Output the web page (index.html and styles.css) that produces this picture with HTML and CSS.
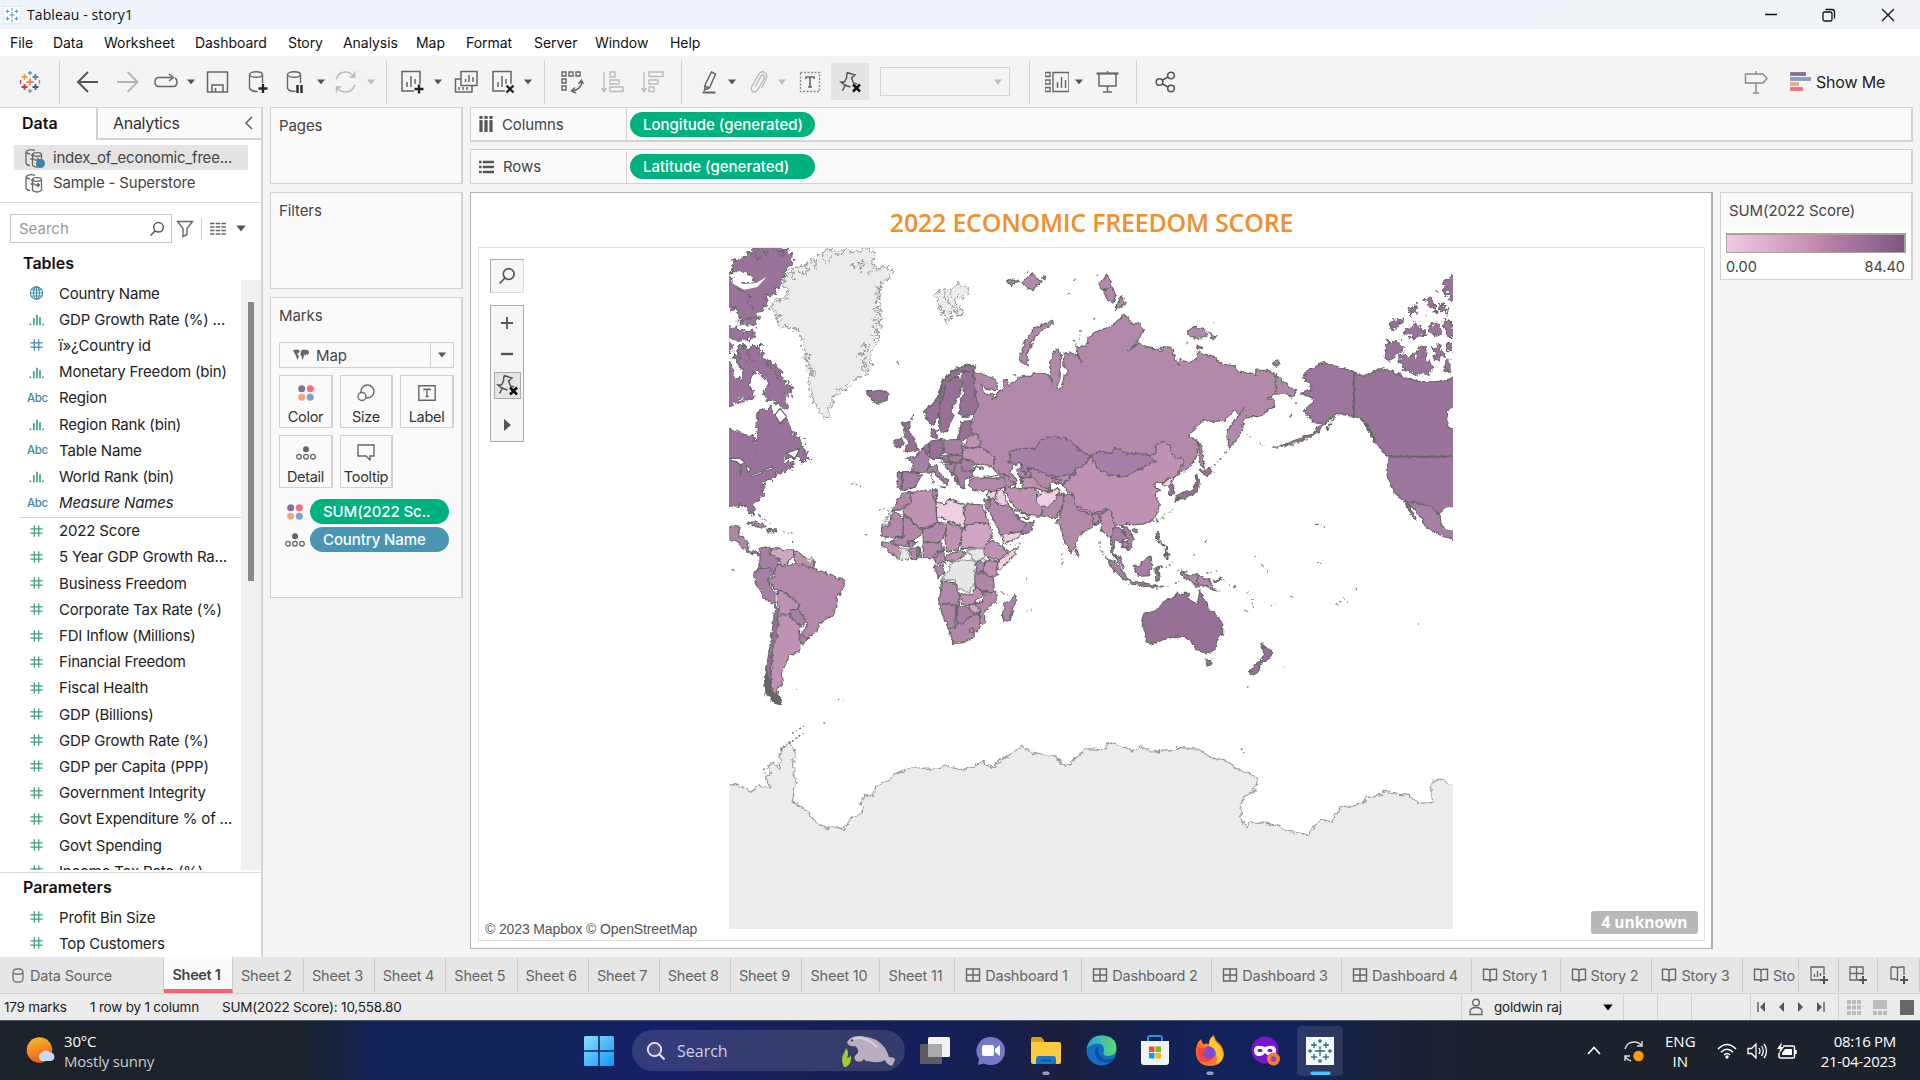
FILE: index.html
```html
<!DOCTYPE html>
<html lang="en">
<head>
<meta charset="utf-8">
<title>Tableau - story1</title>
<link rel="stylesheet" href="styles.css">
</head>
<body>
<svg class="defs" width="0" height="0">
  <defs>
    <symbol id="hash" viewBox="0 0 16 16"><path d="M5.5 1.5v13M10.5 1.5v13M1 5.5h14M1 10.5h14" fill="none" stroke="currentColor" stroke-width="1.4"/></symbol>
    <symbol id="bars" viewBox="0 0 18 16"><path d="M2 13v2M6 7v8M9.5 3v12M13 6v9M16.500 13v2" fill="none" stroke="currentColor" stroke-width="1.9"/></symbol>
    <symbol id="globe" viewBox="0 0 16 16"><g fill="none" stroke="currentColor" stroke-width="1.200"><circle cx="8" cy="8" r="7"/><ellipse cx="8" cy="8" rx="3.300" ry="7"/><path d="M8 1v14M1 8h14M2.300 4.500h11.400M2.300 11.500h11.400"/></g></symbol>
    <symbol id="dots4" viewBox="0 0 16 16"><circle cx="3.700" cy="3.700" r="3.500" fill="#85709c"/><circle cx="12.300" cy="3.700" r="3.500" fill="#f96c80"/><circle cx="3.700" cy="12.300" r="3.500" fill="#f2a67c"/><circle cx="12.300" cy="12.300" r="3.500" fill="#7f9fca"/></symbol>
    <symbol id="detail" viewBox="0 0 20 14"><circle cx="10" cy="3.200" r="3" fill="#666"/><g fill="none" stroke="#666" stroke-width="1.300"><circle cx="3" cy="10.700" r="2.300"/><circle cx="10" cy="10.700" r="2.300"/><circle cx="17" cy="10.700" r="2.300"/></g></symbol>
    <symbol id="mag" viewBox="0 0 16 16"><g fill="none" stroke="#555" stroke-width="1.500"><circle cx="9.500" cy="6.300" r="4.800"/><path d="M6 10l-4.500 4.500"/></g></symbol>
    <symbol id="caret" viewBox="0 0 8 6"><path d="M0 .5h8L4 5.500z" fill="currentColor"/></symbol>
    <symbol id="grid" viewBox="0 0 16 16"><path d="M1.500 2h13v12h-13zM8 2v12M1.500 8h13" fill="none" stroke="#666" stroke-width="1.400"/></symbol>
    <symbol id="book" viewBox="0 0 16 16"><path d="M8 4v11M1.500 2.200h4q2.500 0 2.500 2 0-2 2.500-2h4v10.500h-3.500q-3 0-3 2 0-2-3-2H1.500z" fill="none" stroke="#666" stroke-width="1.400"/></symbol>
    <symbol id="pin" viewBox="0 0 24 24"><path d="M9 2.500l8 2.500-3.500 3 2 5 3.500 1M9 2.500l-.5 5.500-2 4-3.500 0 3.500 3 1 0-3 5.500M8 15.500l4.500 1.500" fill="none" stroke="#555" stroke-width="1.500"/><path d="M15 14.500l7 7M22 14.500l-7 7" stroke="#111" stroke-width="2.500"/></symbol>
    <symbol id="dbset" viewBox="0 0 20 20"><g fill="none" stroke="#666" stroke-width="1.300"><path d="M2 3.500Q6 .5 11 2.500M2 3.500v12q1.500 2 4 2M2 4q2 2 4 2M7 7h3M6.500 11h4"/><ellipse cx="13" cy="6.500" rx="4.500" ry="1.800"/><path d="M8.500 6.500v11q4.500 3 9 0v-11M10.500 12h5m-2-2 2 2-2 2"/></g></symbol>
  </defs>
</svg>

<header class="titlebar">
  <svg class="appicon" viewBox="0 0 20 20"><rect width="20" height="20" fill="#fff" stroke="#ccc"/><path d="M10 7v6M7 10h6M5 4v4M3 6h4M15 4v4M13 6h4M5 12v4M3 14h4M15 12v4M13 14h4M10 2v3M10 15v3" stroke="#5f9fc0" stroke-width="1.300"/></svg>
  <span class="apptitle">Tableau - story1</span>
  <svg class="winctl" viewBox="0 0 140 16"><g fill="none" stroke="#111" stroke-width="1.300"><path d="M0 7.500h12M117 2l12 12M129 2l-12 12"/><rect x="58" y="5" width="9" height="9" rx="1.500"/><path d="M60.500 2.500h6.500q2.500 0 2.500 2.500v6.500"/></g></svg>
</header>
<nav class="menu"><span>File</span><span>Data</span><span>Worksheet</span><span>Dashboard</span><span>Story</span><span>Analysis</span><span>Map</span><span>Format</span><span>Server</span><span>Window</span><span>Help</span></nav>

<div class="toolbar">
  <svg class="i24" viewBox="0 0 24 24"><g stroke-width="1.800"><path d="M12 8.500v7M8.500 12h7" stroke="#f08a3c"/><path d="M6.500 4v6M3.500 7h6" stroke="#f0a04b"/><path d="M17.500 4v6M14.500 7h6" stroke="#5b879b"/><path d="M6.500 14v6M3.500 17h6" stroke="#cc3a4b"/><path d="M17.500 14v6M14.500 17h6" stroke="#3f5b91"/><path d="M12 1v4M10 3h4M21.500 10v4M12 19v4M10 21h4" stroke="#7199a6" stroke-width="1.300"/><path d="M2.500 10v4" stroke="#cc3a4b" stroke-width="1.300"/></g></svg>
  <i class="sep"></i>
  <svg class="i24" viewBox="0 0 24 24"><path d="M23 12H3M13 2L3 12l10 10" fill="none" stroke="#555" stroke-width="2"/></svg>
  <svg class="i24" viewBox="0 0 24 24"><path d="M2 12h20M12.500 2l10 10-10 10" fill="none" stroke="#b5b5b5" stroke-width="2"/></svg>
  <svg class="i24" viewBox="0 0 24 24"><path d="M18 7.500H5q-4 0-4 4.500t4 4.500h14q4 0 4-4.500 0-3-2-4M15 4l4.500 3.500L15 11" fill="none" stroke="#666" stroke-width="1.500"/></svg>
  <svg class="ca"><use href="#caret"/></svg>
  <svg class="i24" viewBox="0 0 24 24"><path d="M2.500 2h20v20h-20zM7 22v-7h11v7M10.500 22v-4" fill="none" stroke="#666" stroke-width="1.500"/></svg>
  <svg class="i24" viewBox="0 0 24 24"><g fill="none" stroke="#666" stroke-width="1.400"><ellipse cx="11" cy="4.500" rx="6.500" ry="2.700"/><path d="M4.500 4.500v14q2 3 8 3M17.500 4.500V13"/></g><path d="M18 14v9M13.500 18.500h9" stroke="#222" stroke-width="2.300"/></svg>
  <svg class="i24" viewBox="0 0 24 24"><g fill="none" stroke="#666" stroke-width="1.400"><ellipse cx="11" cy="4.500" rx="6.500" ry="2.700"/><path d="M4.500 4.500v14q2 3 8 3M17.500 4.500V13"/></g><path d="M14.500 15v8M18.500 15v8" stroke="#222" stroke-width="2.300"/></svg>
  <svg class="ca"><use href="#caret"/></svg>
  <svg class="i24" viewBox="0 0 24 24"><path d="M2 9q3-7 9.500-7 4.500 0 8 4M21 15q-3 7-9.500 7-4.500 0-8-4M20.500 1.500v5.500h-5M2.500 22.500V17h5" fill="none" stroke="#bbb" stroke-width="1.600"/></svg>
  <svg class="ca lt"><use href="#caret"/></svg>
  <i class="sep"></i>
  <svg class="i24" viewBox="0 0 24 24"><path d="M14 21H2V1.500h18V14M7 12v5M11 6v11M15 9v5" fill="none" stroke="#666" stroke-width="1.500"/><path d="M19 14.500v9M14.500 19h9" stroke="#222" stroke-width="2.300"/></svg>
  <svg class="ca"><use href="#caret"/></svg>
  <svg class="i24" viewBox="0 0 24 24"><path d="M7 1.500h16v14H7zM7 9H1.500v13H18v-6M11.500 9v3M15 5v7M19 7v5M5 17v3M9 17v3M13 17v3" fill="none" stroke="#666" stroke-width="1.500"/></svg>
  <svg class="i24" viewBox="0 0 24 24"><path d="M14 21H2V1.500h18V14M7 12v5M11 6v11M15 9v5" fill="none" stroke="#666" stroke-width="1.500"/><path d="M15.500 15.500l7 7M22.500 15.500l-7 7" stroke="#222" stroke-width="2.300"/></svg>
  <svg class="ca"><use href="#caret"/></svg>
  <i class="sep"></i>
  <svg class="i24" viewBox="0 0 24 24"><path d="M2 2h4v4H2zM9 2h4v4H9zM16 2h4v4h-4zM2 9h4v4H2zM2 16h4v4H2zM21.500 11q1 8-9 10M18.500 14l3-4 2 4M15 17.500l-3.500 3.500 4.500 2" fill="none" stroke="#666" stroke-width="1.400"/></svg>
  <svg class="i24" viewBox="0 0 24 24"><path d="M3 2v19M.5 18L3 21.500 5.500 18M9 2h5v5H9zM9 10h9v4H9zM9 17h13v4.500H9z" fill="none" stroke="#bbb" stroke-width="1.400"/></svg>
  <svg class="i24" viewBox="0 0 24 24"><path d="M4 2v19M1.500 18L4 21.500 6.500 18M9 2h14v4.500H9zM9 10h9v4H9zM9 17h5v4.500H9z" fill="none" stroke="#bbb" stroke-width="1.400"/></svg>
  <i class="sep"></i>
  <svg class="i24" viewBox="0 0 24 24"><path d="M13.500 2l4 2-6 14-5 2 1-6zM6 16l6 2" fill="none" stroke="#666" stroke-width="1.500"/><path d="M4.500 22.500h13" stroke="#666" stroke-width="2"/></svg>
  <svg class="ca"><use href="#caret"/></svg>
  <svg class="i24" viewBox="0 0 24 24"><path d="M9 17l6-11q2-2 3 0 .500 1 0 3L11.500 20q-3 3.500-5.500 1-1.500-2 0-5L13 4q3-4 6-1 3 2 1 6l-4.500 9" fill="none" stroke="#bbb" stroke-width="1.400"/></svg>
  <svg class="ca lt"><use href="#caret"/></svg>
  <svg class="i24" viewBox="0 0 24 24"><rect x="2.500" y="2.500" width="19" height="19" fill="none" stroke="#888" stroke-width="1.400" stroke-dasharray="2 1.500"/><path d="M8 9V7h8v2M12 7v10M10 17h4" fill="none" stroke="#666" stroke-width="1.600"/></svg>
  <span class="pinbox"><svg class="i24"><use href="#pin"/></svg></span>
  <span class="combo"><svg class="ca lt"><use href="#caret"/></svg></span>
  <i class="sep"></i>
  <svg class="i24" viewBox="0 0 24 24"><path d="M0 2.500h5v4H0zM0 10h5v4H0zM0 17.500h5v4H0zM8 2.500h16v19H8zM12.500 12v6M16.500 7v11M20.500 10v8" fill="none" stroke="#666" stroke-width="1.400"/></svg>
  <svg class="ca"><use href="#caret"/></svg>
  <svg class="i24" viewBox="0 0 24 24"><path d="M1.500 3.500h22" stroke="#666" stroke-width="2.200"/><path d="M4 4v12h17V4M12.500 16v6M8 22h9M12.500 1v3" fill="none" stroke="#666" stroke-width="1.500"/></svg>
  <i class="sep"></i>
  <svg class="i24" viewBox="0 0 24 24"><g fill="none" stroke="#555" stroke-width="1.600"><circle cx="6.500" cy="12" r="3.300"/><circle cx="18" cy="5.500" r="3.300"/><circle cx="18" cy="18.500" r="3.300"/><path d="M9.500 10l5.500-3M9.500 14l5.500 3"/></g></svg>
  <svg class="i24" viewBox="0 0 24 24"><path d="M1.500 4h17.500l4 4.500-4 4.500H1.500zM12 1v3M12 13v10M9 23h6" fill="none" stroke="#888" stroke-width="1.400"/></svg>
  <svg class="i24 wide" viewBox="0 0 24 24"><path d="M0 4h16" stroke="#85709c" stroke-width="3.800"/><path d="M0 9h21" stroke="#7f9fca" stroke-width="3.800"/><path d="M0 14h9" stroke="#f2a67c" stroke-width="3.800"/><path d="M0 19h13" stroke="#f96c80" stroke-width="3.800"/></svg>
  <span class="showme">Show Me</span>
</div>

<main class="work">
  <aside class="pane">
    <div class="tabs2"><b>Data</b><span>Analytics<svg width="9" height="14" viewBox="0 0 9 14"><path d="M8 1L2 7l6 6" fill="none" stroke="#666" stroke-width="1.600"/></svg></span></div>
    <div class="sources">
      <div class="src on"><svg class="i20"><use href="#dbset"/></svg>index_of_economic_free...<i class="chk"></i></div>
      <div class="src"><svg class="i20"><use href="#dbset"/></svg>Sample - Superstore</div>
    </div>
    <div class="searchrow">
      <span class="sbox">Search<svg width="16" height="16"><use href="#mag"/></svg></span>
      <svg width="18" height="18" viewBox="0 0 18 18"><path d="M1.500 1.500h15l-5.500 7v6l-4 2v-8z" fill="none" stroke="#666" stroke-width="1.400"/></svg>
      <i class="vsep"></i>
      <svg width="16" height="14" viewBox="0 0 16 14"><path d="M0 1.500h16M0 5h16M0 8.500h16M0 12h16" stroke="#666" stroke-width="1.700" stroke-dasharray="4.500 1.200"/></svg>
      <svg class="ca big"><use href="#caret"/></svg>
    </div>
    <h3>Tables</h3>
    <div class="listwrap">
      <ul class="fields">
        <li class="d"><svg><use href="#globe"/></svg>Country Name</li>
        <li><svg><use href="#bars"/></svg>GDP Growth Rate (%) ...</li>
        <li class="d"><svg><use href="#hash"/></svg>ï»¿Country id</li>
        <li><svg><use href="#bars"/></svg>Monetary Freedom (bin)</li>
        <li class="d"><em class="abc">Abc</em>Region</li>
        <li><svg><use href="#bars"/></svg>Region Rank (bin)</li>
        <li class="d"><em class="abc">Abc</em>Table Name</li>
        <li><svg><use href="#bars"/></svg>World Rank (bin)</li>
        <li class="d it"><em class="abc">Abc</em>Measure Names</li>
      </ul>
      <ul class="fields meas">
        <li><svg><use href="#hash"/></svg>2022 Score</li>
        <li><svg><use href="#hash"/></svg>5 Year GDP Growth Ra...</li>
        <li><svg><use href="#hash"/></svg>Business Freedom</li>
        <li><svg><use href="#hash"/></svg>Corporate Tax Rate (%)</li>
        <li><svg><use href="#hash"/></svg>FDI Inflow (Millions)</li>
        <li><svg><use href="#hash"/></svg>Financial Freedom</li>
        <li><svg><use href="#hash"/></svg>Fiscal Health</li>
        <li><svg><use href="#hash"/></svg>GDP (Billions)</li>
        <li><svg><use href="#hash"/></svg>GDP Growth Rate (%)</li>
        <li><svg><use href="#hash"/></svg>GDP per Capita (PPP)</li>
        <li><svg><use href="#hash"/></svg>Government Integrity</li>
        <li><svg><use href="#hash"/></svg>Govt Expenditure % of ...</li>
        <li><svg><use href="#hash"/></svg>Govt Spending</li>
        <li><svg><use href="#hash"/></svg>Income Tax Rate (%)</li>
      </ul>
      <div class="track"><i></i></div>
    </div>
    <div class="params">
      <h3>Parameters</h3>
      <ul class="fields">
        <li><svg><use href="#hash"/></svg>Profit Bin Size</li>
        <li><svg><use href="#hash"/></svg>Top Customers</li>
      </ul>
    </div>
  </aside>

  <section class="cards">
    <div class="card pages">Pages</div>
    <div class="card filters">Filters</div>
    <div class="card marks">Marks
      <div class="drop"><svg width="16" height="12" viewBox="0 0 16 12"><path d="M0 1l5-.5 2 1.500-1.500 2L4 5l2 2-1.500 4L3 7 1.500 4zM8 2l2-1.500 5 .5 1 2-1 3-1.500-1L12.500 7 11 5l-.5 4-1 2-1-4-1-1.500z" fill="#666"/></svg><span>Map</span><i><svg class="ca"><use href="#caret"/></svg></i></div>
      <div class="btns">
        <div><svg width="16" height="16"><use href="#dots4"/></svg>Color</div>
        <div><svg width="18" height="18" viewBox="0 0 18 18"><g fill="none" stroke="#666" stroke-width="1.400"><circle cx="10.500" cy="7.500" r="6.500"/><circle cx="5" cy="12.500" r="4" fill="#fafafa"/></g></svg>Size</div>
        <div><svg width="18" height="16" viewBox="0 0 18 16"><path d="M.8.800h16.400v14.400H.8zM6 5.500V4.300h6v1.200M9 4.300v7.200M7.500 11.500h3" fill="none" stroke="#666" stroke-width="1.400"/></svg>Label</div>
        <div><svg width="20" height="14"><use href="#detail"/></svg>Detail</div>
        <div><svg width="18" height="17" viewBox="0 0 18 17"><path d="M1 1h16v11h-4v4l-4-4H1z" fill="none" stroke="#666" stroke-width="1.400"/></svg>Tooltip</div>
      </div>
      <div class="prow"><svg width="16" height="16"><use href="#dots4"/></svg><span class="pill">SUM(2022 Sc..</span></div>
      <div class="prow"><svg width="20" height="14"><use href="#detail"/></svg><span class="pill blue">Country Name</span></div>
    </div>
  </section>

  <section class="right">
    <div class="shelf"><span class="sl"><svg width="14" height="16" viewBox="0 0 14 16"><path d="M2 0v16M7 0v16M12 0v16" stroke="#555" stroke-width="3.200"/><path d="M0 3.500h14" stroke="#fafafa" stroke-width="1.200"/></svg>Columns</span><span class="pill big">Longitude (generated)</span></div>
    <div class="shelf rows"><span class="sl"><svg width="15" height="14" viewBox="0 0 15 14"><path d="M0 2h15M0 7h15M0 12h15" stroke="#555" stroke-width="2.600"/><path d="M3.200 0v14" stroke="#fafafa" stroke-width="1.200"/></svg>Rows</span><span class="pill big">Latitude (generated)</span></div>
    <div class="lower">
      <div class="viz">
        <h1>2022 ECONOMIC FREEDOM SCORE</h1>
        <div class="mapbox">
          <svg class="map" width="1225" height="692" viewBox="479 248 1225 692">
            <defs>
              <filter id="coast" x="-5%" y="-5%" width="110%" height="110%"><feTurbulence type="fractalNoise" baseFrequency=".075" numOctaves="3" seed="4"/><feDisplacementMap in="SourceGraphic" scale="32" xChannelSelector="R" yChannelSelector="G"/></filter>
              <filter id="soft" x="-5%" y="-5%" width="110%" height="110%"><feTurbulence type="fractalNoise" baseFrequency=".07" numOctaves="3" seed="9"/><feDisplacementMap in="SourceGraphic" scale="15" xChannelSelector="R" yChannelSelector="G"/></filter>
              <clipPath id="world"><rect x="729" y="248" width="724" height="681"/></clipPath>
            </defs>
            <g clip-path="url(#world)">
              <!-- Antarctica -->
              <g class="gray" transform="translate(700 700) scale(.4974 .3333)" filter="url(#soft)">
                <path d="M50 253L70 253 88 262 102 280 112 268 118 250 126 262 143 265 132 235 140 215 135 200 150 186 158 208 165 180 158 170 170 140 180 125 190 150 186 195 192 250 186 302 215 335 237 373 256 386 268 379 289 388 295 372 327 332 323 315 332 283 346 290 355 260 382 240 392 220 412 211 430 203 445 208 480 206 492 198 530 210 550 200 570 183 588 205 600 183 630 158 648 139 672 161 714 168 735 202 755 175 778 146 815 150 820 128 850 138 872 155 888 138 906 156 950 152 960 142 1000 147 1030 175 1050 178 1085 210 1108 222 1121 238 1115 270 1098 285 1088 315 1088 355 1098 383 1108 366 1140 370 1168 380 1172 391 1222 403 1246 358 1270 365 1290 320 1315 318 1345 292 1370 286 1374 268 1385 279 1425 286 1440 300 1445 310 1473 307 1468 250 1485 237 1497 243 1502 252 1525 254 1540 254 1540 760 30 760 30 253z"/>
              </g>
              <!-- Americas, Greenland -->
              <g class="gray" transform="translate(720 240) scale(.3333)" filter="url(#coast)">
                <path d="M330 20L350 40 380 30 400 35 440 22 465 42 455 65 480 90 500 78 518 92 508 115 485 125 480 160 475 190 482 230 478 290 462 310 450 350 458 380 440 400 395 420 380 445 345 462 330 500 322 535 305 525 285 490 270 450 265 410 285 400 265 370 250 320 240 275 215 260 180 260 165 240 185 230 150 205 165 185 200 170 205 145 185 130 200 105 230 80 260 75 290 50z"/>
                <path d="M650 155L680 150 700 145 715 130 748 145 740 170 715 170 705 185 730 215 720 230 700 200 690 225 685 250 670 225 665 200 655 195z"/>
                <path d="M215 85l10 35M240 75l8 30M260 70l5 30M285 55l0 35M310 45l8 30M335 40l-5 25M390 80l30-12 35 0M420 95l15-25M450 110l5-30 15 10M468 140l15 8-20 12 18 10-18 15 18 10-20 15 20 12-22 14 20 12-20 14 15 12-18 12M450 320l-25-5 15 20-22 8 22 12-18 12 20 8-20 12 32 6M165 230l25-8M168 240l22-4M250 340l18 10-14 14M262 380l18 12-14 18M672 160l4 30M690 155l-4 40"/>
              </g>
              <g class="ca1" transform="translate(720 240) scale(.3333)" filter="url(#coast)">
                <path d="M100 25L180 15 215 40 218 65 195 100 180 130 160 160 135 170 140 195 115 225 95 240 80 230 60 240 55 215 20 205 20 100 60 135 105 125 90 105 60 95 35 95 40 65 75 50z"/>
                <path d="M35 262L80 275 105 270 105 298 50 300 20 295 20 262zM55 240l20-5 40 0-5 20-55 0zM20 310h20L35 335H20z"/>
                <path d="M50 320L120 320 130 350 165 375 185 400 190 420 217 440 210 465 190 465 205 510 170 490 140 480 130 460 145 430 115 395 95 405 90 440 105 470 85 480 60 480 30 500H20V340L45 410 65 425 70 400 45 360z"/>
                <path d="M20 560L80 585 100 585 105 622 115 580 105 560 115 510 150 505 185 550 200 535 220 580 250 605 250 630 270 660 255 665 235 655 200 655 190 665 225 670 205 690 170 700 165 712 140 720 130 735 135 755 115 780 98 795 102 825 95 828 85 800 50 797 20 800z"/>
                <path d="M60 150l30 10-5 30 20 20M30 200l25 10M100 40l20 15M130 30l15 20M160 25l20 15M190 30l-15 20M40 130l20 20M60 330l-5 40 20 20M90 325l-5 30 20 10M130 355l30 30 20 40"/>
              </g>
              <g class="w" transform="translate(720 240) scale(.3333)">
                <path d="M28 655L60 655 75 668 62 675 50 665 35 662zM60 680l6 0-5 25zM78 675l15 12-10 12zM90 708l35-15 0 6-30 12zM130 690l28-10 0 7-25 6zM165 525l15-20 20 25-20 20zM200 640l40-15-15 30z"/>
                <path class="sea" d="M20 505l30-10 30 0 28 15-2 50-5 20-20 3-40-18-30-10zM38 108l30 24 40-3 32-18-28 30-40 8-34-18z"/>
              </g>
              <g transform="translate(720 240) scale(.3333)" filter="url(#soft)">
                <path class="p3" d="M20 870L45 855 60 860 55 885 80 900 85 930 120 940 115 945 80 935 50 905 20 898zM80 850L110 845 140 860 120 862zM140 868l30 2 0 8-25 0z"/>
                <path class="p2" d="M120 925L150 918 150 945 175 955 175 985 160 1000 140 990 120 985z"/>
                <path class="p6" d="M155 925L200 930 220 930 222 950 200 965 200 975 185 980 180 958 150 945z"/>
                <path class="p5" d="M220 930L285 965 280 990 225 975z"/>
                <path class="lg" d="M260 952l18 8-10 12z"/>
                <path class="p2" d="M100 1005L115 985 150 985 165 1000 145 1015 150 1040 165 1055 165 1095 130 1075 105 1025z"/>
                <path class="p4" d="M165 985L175 970 185 980 215 975 230 970 280 985 320 1000 370 1020 375 1040 352 1070 350 1105 335 1130 300 1145 290 1175 265 1195 240 1185 262 1155 235 1130 235 1105 200 1060 165 1048 145 1018 165 1010z"/>
                <path class="p5" d="M172 1050L200 1060 238 1095 230 1110 205 1125 180 1120 172 1090z"/>
                <path class="p2" d="M210 1110L235 1108 258 1140 245 1160 215 1140zM240 1180L265 1195 250 1212 235 1205z"/>
                <path class="p5" d="M178 1125L205 1125 240 1160 238 1185 240 1235 210 1245 195 1275 185 1300 190 1320 175 1345 170 1360 150 1350 155 1280 160 1200z"/>
                <path class="p1" d="M165 1095L175 1110 172 1180 155 1250 152 1330 150 1360 175 1385 160 1385 138 1355 135 1310 148 1230 160 1150z"/>
                <path class="dk" d="M138 1280l-4 40 4 40 22 26 25 6-8-24-15-10-12-25z"/>
                <path class="isl" d="M115 825L140 845 150 850M190 880h28v35M38 988l8 4M395 728l42 18M435 885l12 8M225 1350h12M475 810h35M530 370l8-4M355 1378l15 4"/>
              </g>
              <!-- Africa, Europe, Asia -->
              <g transform="translate(860 240) scale(.3333)" filter="url(#soft)">
                <path class="p4" d="M340 395L375 405 400 415 413 432 410 448 385 450 362 432 372 455 385 465 405 462 394 478 412 470 408 460 425 452 435 445 430 420 442 418 446 435 460 425 480 412 500 408 515 410 530 398 550 400 570 412 578 430 568 375 580 345 590 325 600 335 603 375 600 415 592 440 600 447 610 430 612 405 625 405 620 390 612 380 610 340 620 335 640 345 650 340 665 370 655 345 650 320 680 318 685 290 720 270 750 262 775 240 790 222 805 235 815 250 840 250 850 270 835 300 805 335 835 308 860 322 900 332 910 320 935 322 943 350 955 375 960 358 985 368 1010 360 1012 338 1060 348 1085 372 1125 378 1135 398 1155 395 1185 405 1190 390 1225 392 1248 405 1275 430 1290 445 1310 452 1295 475 1285 465 1260 462 1240 462 1225 475 1240 480 1245 500 1225 510 1195 530 1160 530 1150 540 1148 570 1130 600 1110 625 1102 600 1102 570 1118 550 1135 530 1155 505 1140 520 1125 512 1105 530 1090 545 1025 542 1005 565 985 590 1010 600 1015 620 1010 650 990 680 970 695 945 708 900 650 690 680 560 700 460 735 430 715 400 680 405 655 385 640 360 620 355 590 335 580 335 545 340 525 355 500 345 460z"/>
                <path class="p4" d="M577 240L580 250 555 265 525 290 510 320 498 345 505 375 490 372 478 355 490 320 500 295 520 268 545 255zM740 102l14 25-2 18-30 4-2-20zM730 152l28-10 9 25-8 22-18-12zM782 168l18 22-34 20zM982 272l15-10 35 3 10 20-20 12-35-6zM1045 278l25 10-12 8zM1010 315l18 10-15 4zM1015 605l8 10 10 70-12-10zM440 125l20-8 15 5-20 18zM485 130l30-30 15 15 15 10-30 25zM545 115l12-8-2 15z"/>
                <path class="p5" d="M693 650L712 685 745 703 795 710 835 690 860 675 885 665 865 655 888 640 890 610 910 605 930 615 935 640 950 655 975 660 960 690 945 708 920 720 905 735 895 722 880 735 890 748 900 750 885 765 898 790 895 815 880 840 850 852 820 855 800 848 785 858 770 855 755 835 755 815 735 808 700 820 660 805 645 790 640 765 620 752 610 735 640 703 650 685 680 670z"/>
                <path class="p2" d="M690 647L660 632 625 598 585 588 540 600 530 625 480 625 450 635 447 665 470 675 485 670 485 690 500 705 502 682 530 690 565 705 600 715 640 703 650 685 680 670z"/>
                <path class="p2" d="M693 647L715 635 755 640 765 622 800 642 830 640 862 643 885 665 860 675 835 690 795 710 745 703 712 685z"/>
                <path class="p8" d="M905 735L920 720 945 708 938 725 930 738 918 738z"/>
                <path class="p1" d="M928 740l12-5 4 20-8 12-10-4zM1020 692l25-6 15 8-20 14zM1010 702l8 25-8 30-20 8-15 10-22 2-8 10 4-18 20-12 25-5 12-15z"/>
                <path class="p4" d="M610 760L640 765 645 790 660 805 700 820 735 812 755 815 740 830 720 850 700 855 690 865 665 880 650 895 648 920 632 938 615 910 603 870 600 855 585 850 600 835 600 810 610 790z"/>
                <path class="p4" d="M650 930l8 10-4 12-8-4zM545 828L540 800 560 800 580 785 598 760 610 760 612 785 600 810 590 835 575 835zM650 798l50 18-2 8-45-14zM696 822l22 2-4 28-16-4z"/>
                <path class="p5" d="M435 732L450 742 480 750 520 742 535 755 530 785 545 800 545 828 520 828 495 820 470 808 450 780 437 755zM485 712L530 712 550 735 575 750 560 755 520 742 490 745z"/>
                <path class="p4" d="M502 682L530 690 565 705 605 720 570 732 572 748 545 740 520 715zM575 715L600 708 640 703 612 730 585 730zM418 700l25 8 20 24-20 8-20-20z"/>
                <path class="p8" d="M530 775L545 755 575 755 595 742 598 760 580 785 560 800 535 795z"/>
                <path class="p5" d="M720 830l20-20 15 5 0 20 15 25-10 20 0 10-15 0-20-20z"/>
                <path class="p2" d="M755 870l20-5 20 15 5 15-20 10-15-5-5 30 10 30-15-20zM785 858l20 5 15 35-10 30-10 0 5-30-20-25z"/>
                <path class="p3" d="M785 905l20 0-5 18-12 0zM820 870l10-3 2 8-9 4z"/>
                <path class="p2" d="M768 945l15 8 10 30-10-5-12-15zM740 955l25 12 35 40 5 15-12-2-35-35zM820 980l20-5 25-25 10 5 0 30-10 22-30 2zM885 985l20-8-12 15 8 12-8 20-6-10zM805 1022l40 6 60 12-35 0-60-8zM890 875l8 0-2 25-8-5zM920 930l8 12-8 10z"/>
                <path class="p4" d="M965 995l20 10 28 0 35 15 10 25 22 8-20-2-25-15-25 5-20-22-25-10zM1060 1020l22-5-15 12z"/>
                <path class="p4" d="M330 720L345 712 400 715 432 712 440 740 400 752 340 752 328 735zM378 780L400 780 420 795 450 800 480 840 500 850 520 845 515 870 480 875 445 880 425 885 405 850 385 815z"/>
                <path class="p2" d="M500 850L523 846 515 870 490 885 480 878zM372 780l14-4 4 28-12 4z"/>
                <path class="p8" d="M410 755L430 750 435 775 450 800 420 795 400 780zM385 755L412 752 408 775 385 780zM425 885L480 875 480 890 430 910z"/>
                <path class="isl" d="M640 118h8M625 160l6 6M700 238l8-4M735 245l12 8M660 270v30M710 105l8 4M460 405h6M640 300l10 15M615 335l20 15M500 95l20-15M425 915l65-5M498 1015l4 2M500 1115l18-5M425 1058l15 2M605 940l2 50"/>
              </g>
              <g transform="translate(860 240) scale(.3333)" filter="url(#soft)">
                <path class="p5" d="M315 792L365 795 372 812 390 852 315 852zM150 760L180 750 225 750 220 775 228 785 230 835 235 848 185 868 130 820 130 800 150 785zM262 848L310 865 305 905 290 930 260 935 255 900zM370 905L405 905 450 940 420 960 385 955 370 935zM260 945L305 930 320 940 285 965 255 960zM375 960L412 965 412 1000 400 1015 370 1000zM300 1065L335 1065 345 1042 370 1048 365 1070 330 1095 305 1092zM65 905L110 915 120 925 118 958 90 935 70 920z"/>
                <path class="p8" d="M228 785L255 792 265 778 300 788 312 795 315 865 285 850 230 830zM450 935L472 920 465 945 415 995 412 965z"/>
                <path class="p6" d="M315 852L385 853 400 880 385 905 372 925 305 925 302 900 312 870zM325 1100L345 1088 363 1092 358 1118 340 1120z"/>
                <path class="p3" d="M125 760L150 758 155 785 125 805 95 815zM220 750l12 5-5 30-8-15z"/>
                <path class="lg" d="M90 818L110 818 108 830 92 835 88 855 65 855zM320 930L370 925 375 955 345 965zM280 965L345 960 350 985 340 1035 330 1058 290 1045 285 1020 245 1018 265 990zM120 925L148 928 148 958 118 958z"/>
                <path class="p4" d="M65 860L92 855 92 830 108 818 130 835 130 890 85 895 65 890zM130 825L185 868 190 880 160 900 140 920 115 915 90 905 130 890zM188 870L235 848 260 850 255 885 240 905 190 905zM190 908L245 905 250 930 225 955 190 950zM220 945L250 930 258 970 225 968zM150 925l30-2 5 30-30 5zM140 905l30 0-20 18zM245 1022L290 1030 298 1065 298 1095 237 1092zM372 1058L410 1055 408 1085 375 1110 378 1145 360 1155 358 1110 345 1090 370 1085zM265 1165L285 1165 290 1150 315 1145 340 1120 358 1122 362 1160 335 1195 310 1208 280 1210z"/>
                <path class="p3" d="M345 1000L375 998 400 1015 403 1055 370 1055 345 1040zM350 965L375 965 370 995 345 995zM222 980L250 975 250 1005 235 1010zM237 1092L300 1095 287 1100 285 1165 265 1165 250 1130zM462 1062L468 1080 450 1140 432 1145 427 1125 435 1090 455 1080z"/>
                <path class="p2" d="M290 1102L320 1098 340 1120 315 1145 290 1150zM170 925h8v25h-8z"/>
                <circle class="p4" cx="335" cy="1174" r="7"/>
              </g>
              <g transform="translate(860 240) scale(.3333)" filter="url(#soft)">
                <path class="p1" d="M215 555L195 530 195 510 225 490 250 420 290 385 320 372 350 378 345 392 300 400 260 425 240 480 235 530zM240 575L238 500 262 425 290 408 305 420 300 465 275 505 280 530 265 560 262 575zM310 395L340 395 345 460 355 500 340 525 310 532 298 520 300 490 312 465 305 420zM215 565L232 570 228 595 213 590z"/>
                <path class="p1" d="M305 545L333 542 335 580 355 585 325 600 295 595 300 570zM205 605L245 598 252 630 240 655 210 655zM128 550L150 545 148 575 165 605 175 630 135 635 145 610 133 585zM105 600L125 590 130 615 105 625zM20 455L35 455 60 450 85 460 80 480 55 490 35 480zM240 655l30-15 20 15-25 15zM185 625l20-20 5 25-8 15z"/>
                <path class="p2" d="M250 600L305 598 308 640 280 645 255 635zM190 625L210 655 205 695 175 698 158 695 160 670 140 655 165 650 178 635zM112 698L160 698 185 705 165 740 145 750 112 745zM205 680L230 675 235 695 268 728 260 735 225 700 205 695zM300 660L335 658 343 690 305 692zM265 648l40-2 0 20-35 8zM250 675L300 668 305 690 340 695 335 712 318 715 312 745 295 735 280 705z"/>
                <path class="p5" d="M325 590L355 585 362 615 340 625 310 620zM310 625L360 620 385 635 405 655 400 675 365 675 345 672 330 660 305 655z"/>
                <path class="ln" d="M128 698l-2 48M265 690l25 20 8 20M285 675l-5 30M240 665l30 5 30-5M245 425l40-36 40-15 22 6M200 510l30-30 18-45M215 700l4 30M236 738l22 6M140 575l-10-20M155 540l6-15"/>
              </g>
              <g class="w" transform="translate(860 240) scale(.3333)" filter="url(#soft)">
                <path d="M460 675L480 670 483 680 470 690 480 710 490 745 465 745 468 720 452 700zM335 700L350 680 370 685 365 675 395 680 415 705 380 712 345 712zM455 805l20 8 25 12 5 10-25 0z"/>
              </g>
              <!-- Pacific -->
              <g transform="translate(1060 240) scale(.3333)" filter="url(#soft)">
                <path class="au" d="M420 1052L430 1075 440 1085 445 1105 465 1120 488 1150 488 1180 470 1205 465 1230 440 1240 410 1232 395 1205 375 1190 355 1188 320 1195 300 1205 268 1213 258 1208 260 1190 245 1145 250 1125 290 1110 315 1080 340 1075 350 1060 388 1060 385 1078 412 1092zM438 1260l20-2-5 20-12 0z"/>
                <path class="au" d="M602 1208L620 1225 638 1235 630 1255 610 1262 590 1300 572 1308 568 1295 600 1260 615 1250z"/>
                <path class="p4" d="M640 368l15-5 5 8-15 5z"/>
                <path class="us" d="M745 390L790 368 830 380 882 395 882 530 830 520 800 545 770 580 700 612 650 622 720 595 760 580 785 548 760 545 730 510 762 490 760 475 722 460 755 450 750 430 728 415z"/>
                <path class="us" d="M990 650H1200V800L1150 805 1140 825 1110 800 1085 790 1035 785 1000 755 982 710 980 680z"/>
                <path class="ca0" d="M882 395L915 410 960 385 1000 395 1040 415 1080 425 1130 425 1200 410V500L1162 510 1165 560 1200 575V650H990L950 615 925 570 910 540 882 530z"/>
                <path class="p2" d="M1035 785L1085 790 1110 800 1140 825 1145 860 1200 880V905L1140 885 1100 865 1085 835 1055 800 1045 795 1070 840 1060 835z"/>
                <path class="ln" d="M647 405V465M413 1000V1040"/>
              </g>
              <g class="w" transform="translate(1060 240) scale(.3333)">
                <path class="sea" d="M1190 802l-28 0-16 14-2 30 14 22 32 6zM1190 500l-22 8-6 30 8 24 20 6z"/>
              </g>
              <g class="ca0" transform="translate(1060 240) scale(.3333)" filter="url(#coast)">
                <path d="M985 305L1015 305 1035 325 1005 345 985 365 975 350zM1020 340L1070 350 1080 320 1095 315 1100 355 1120 390 1100 405 1060 400 1030 385 1020 360zM995 250l20-20 18 10-20 20-18 8zM1045 215l20-22 5 20-15 12zM1098 175l18 0 18 40-18-5-15-15zM1140 190l15 5 5 25-15-5zM1200 85V205L1165 175 1150 130zM1030 260l25 5 15-18 15 20 12 15-35 12-25-10zM1105 265l15-15 20 0 0 35-25 0zM1150 240l28 10v45l-15-5-10-25zM1118 325l20-10 12 30-15 18-15-15zM1160 315l20-5v20l-20 5zM1155 355h15l0 40-15-10z"/>
              </g>
              <g class="isl" transform="translate(1060 240) scale(.3333)" filter="url(#soft)">
                <path d="M440 690l30-20 35-40M640 622l60-8 60-25M768 850l20 5 10 15M605 970l20 30M585 945l15 8M770 965l15 10M560 1055l15 15 5 40M555 1110l18 12M632 1098l20-8M690 1070l12 5M830 1095l20-18 20 10M885 1045l12 3M480 1010l30 22 30 20M440 1000l30-8M300 905l20 25M350 990l35 8M205 1030l60 8 65 0M345 1030l50-15M290 1048l20-10M120 905v20l15 25 35 55M435 905l8-12M305 835l40-30M560 585l20 8M600 610l15 8M400 945h12M690 525l5 8M705 490h12M1075 1157h2M667 1283h3M562 1343h3M318 985l18-20M1130 150l4 6M1095 225l8 10M1160 225l10 4M460 245h5M380 310h6"/>
                <path class="thick" d="M295 885v20l22 15 5 35-10-15M905 540l20 20 20 45M965 630l25 25M350 780l10-10M292 835v12M290 985l8 25M800 570l25-40"/>
              </g>
            </g>
            <path class="ln" d="M1354 372v44M1391 456.500h56"/>
            <g class="isl" transform="translate(700 700) scale(.4974 .3333)"><path d="M185 125l20-25M160 165l10-25M185 100l28-25M128 205l5 25M248 68l6 3M1088 145l8 20M178 130l30-30M162 150l8-15"/></g>
          </svg>
          <div class="mapsearch"><svg width="18" height="18"><use href="#mag"/></svg></div>
          <div class="mapctl">
            <svg width="14" height="14" viewBox="0 0 14 14"><path d="M7 1v12M1 7h12" stroke="#555" stroke-width="1.800"/></svg>
            <svg width="14" height="14" viewBox="0 0 14 14"><path d="M1 7h12" stroke="#555" stroke-width="2.400"/></svg>
            <span class="mpin"><svg width="24" height="24"><use href="#pin"/></svg></span>
            <svg class="play" width="14" height="14" viewBox="0 0 14 14"><path d="M4 1v12l7-6z" fill="#555"/></svg>
          </div>
          <span class="attr">© 2023 Mapbox © OpenStreetMap</span>
          <span class="unk">4 unknown</span>
        </div>
      </div>
      <div class="legend">
        <div class="lt1">SUM(2022 Score)</div>
        <div class="grad"></div>
        <div class="lv"><span>0.00</span><span>84.40</span></div>
      </div>
    </div>
  </section>
</main>

<div class="sheets">
  <span class="ds"><svg width="12" height="15" viewBox="0 0 12 15"><rect x="1" y="1" width="10" height="13" rx="3.500" fill="none" stroke="#777" stroke-width="1.400"/><path d="M1 5q5 2.500 10 0" fill="none" stroke="#777" stroke-width="1.400"/></svg>Data Source</span>
  <span class="act">Sheet 1</span><span>Sheet 2</span><span>Sheet 3</span><span>Sheet 4</span><span>Sheet 5</span><span>Sheet 6</span><span>Sheet 7</span><span>Sheet 8</span><span>Sheet 9</span><span>Sheet 10</span><span>Sheet 11</span>
  <span><svg class="i16"><use href="#grid"/></svg>Dashboard 1</span><span><svg class="i16"><use href="#grid"/></svg>Dashboard 2</span><span><svg class="i16"><use href="#grid"/></svg>Dashboard 3</span><span><svg class="i16"><use href="#grid"/></svg>Dashboard 4</span>
  <span><svg class="i16"><use href="#book"/></svg>Story 1</span><span><svg class="i16"><use href="#book"/></svg>Story 2</span><span><svg class="i16"><use href="#book"/></svg>Story 3</span><span class="cut"><svg class="i16"><use href="#book"/></svg>Sto</span>
  <span class="new"><svg width="20" height="20" viewBox="0 0 20 20"><path d="M11 15H2V2h13v8M5.500 9v3M8.500 6v6M11.500 8v3" fill="none" stroke="#666" stroke-width="1.300"/><path d="M15 11v8M11 15h8" stroke="#555" stroke-width="2"/></svg></span>
  <span class="new"><svg width="20" height="20" viewBox="0 0 20 20"><path d="M11 15H2V2h13v8M8.500 2v13M2 8.500h13" fill="none" stroke="#666" stroke-width="1.300"/><path d="M15 11v8M11 15h8" stroke="#555" stroke-width="2"/></svg></span>
  <span class="new"><svg width="20" height="20" viewBox="0 0 20 20"><path d="M2 2h4q2.500 0 2.500 2 0-2 2.500-2h4v8M8.500 4v12q0-2-3-2H2V2" fill="none" stroke="#666" stroke-width="1.300"/><path d="M15 11v8M11 15h8" stroke="#555" stroke-width="2"/></svg></span>
</div>
<div class="status">
  <span class="s1">179 marks</span><span class="s2">1 row by 1 column</span><span class="s3">SUM(2022 Score): 10,558.80</span>
  <span class="user"><svg width="14" height="18" viewBox="0 0 14 18"><g fill="none" stroke="#666" stroke-width="1.400"><circle cx="7" cy="4.500" r="3.300"/><path d="M1 16.500v-3q0-4 6-4t6 4v3z"/></g></svg>goldwin raj<svg class="ca big blk"><use href="#caret"/></svg></span>
  <span></span><span></span><span></span>
  <span class="navs"><svg width="68" height="10" viewBox="0 0 68 10"><path d="M1 0v10M67 0v10" stroke="#666" stroke-width="1.500"/><path d="M8 0v10L3 5zM27 0v10l-5-5zM41 0v10l5-5zM60 0v10l5-5z" fill="#555"/></svg></span>
  <span class="views"><svg width="68" height="15" viewBox="0 0 68 15"><path d="M0 2h14M0 7.500h14M0 13h14" stroke="#bbb" stroke-width="4" stroke-dasharray="4 1"/><path d="M26 0h14v9H26z" fill="#bbb"/><path d="M26 13h14" stroke="#bbb" stroke-width="4" stroke-dasharray="4 1"/><path d="M53 0h14v15H53z" fill="#666"/></svg></span>
</div>

<footer class="taskbar">
  <div class="weather"><svg width="30" height="30" viewBox="0 0 30 30"><defs><linearGradient id="sun" x2=".3" y2="1"><stop stop-color="#f7c02c"/><stop offset="1" stop-color="#f0601c"/></linearGradient></defs><circle cx="13.500" cy="14" r="12.800" fill="url(#sun)"/><path d="M16 25a4.500 4.500 0 0 1 0-8.500 5 5 0 0 1 8 0 4.300 4.300 0 0 1 1 8.500z" fill="#c5dbf8"/></svg><p>30°C<br><span>Mostly sunny</span></p></div>
  <svg class="win" width="30" height="30" viewBox="0 0 30 30"><defs><linearGradient id="wg" x2="1" y2="1"><stop stop-color="#8be0fd"/><stop offset="1" stop-color="#0f96fb"/></linearGradient></defs><path d="M0 1.500Q0 0 1.500 0H14.200v14.200H0zM15.800 0h12.700Q30 0 30 1.500v12.700H15.800zM0 15.800h14.200V30H1.500Q0 30 0 28.500zM15.800 15.800H30v12.700q0 1.500-1.500 1.500H15.800z" fill="url(#wg)"/></svg>
  <div class="tsearch"><svg width="20" height="20" viewBox="0 0 20 20"><circle cx="8.500" cy="8.500" r="6.700" fill="#4a4f86" stroke="#e4e6f2" stroke-width="1.800"/><path d="M13.500 13.500l5 5" stroke="#e4e6f2" stroke-width="2"/></svg><span>Search</span>
    <svg width="58" height="34" viewBox="0 0 58 34"><path d="M5 33q-4-8 0-14 3-5 1-6 5 5 2 11 4-1 4-3 1 9-5 12z" fill="#a4c936"/><path d="M8 8Q12 1 22 2 38 3 46 14q3 5 4 9 6 0 6 3l-3 6q-6-2-7-6-6 4-17 1-2 1-4-2-2 4-8 2-4-4 2-8 1-4-3-7-7 1-8-4z" fill="#b9aec0"/><path d="M14 5q12-4 24 8" fill="none" stroke="#d8d0dc" stroke-width="2"/><circle cx="13" cy="6.500" r="1" fill="#333"/></svg></div>
  <svg width="30" height="28" viewBox="0 0 30 28"><rect y="7" width="22" height="20" rx="1.500" fill="#5b5b62"/><rect x="8" width="22" height="20" rx="1.500" fill="#f2f2f4"/><path d="M8 7h14v13H8z" fill="#aaa"/></svg>
  <svg width="30" height="30" viewBox="0 0 30 30"><path d="M15 1a14 14 0 0 1 0 28q-4 0-7-1.500L2 29l1-6A14 14 0 0 1 15 1z" fill="#7679cb"/><rect x="6" y="9" width="12" height="11" rx="2" fill="#fff"/><path d="M19 13l5-4v11l-5-4z" fill="#fff"/></svg>
  <svg class="run" width="31" height="30" viewBox="0 0 31 30"><path d="M0 3q0-2 2-2h8l3 3v6H0z" fill="#df9b12"/><path d="M0 6h28q2 0 2 2v18q0 2-2 2H2q-2 0-2-2z" fill="#fccb40"/><path d="M5 28v-5q0-3 3-3h14q3 0 3 3v5z" fill="#1379d0"/><path d="M10 24.500h10" stroke="#0a4f96" stroke-width="1.500"/><rect x="11.500" y="35.500" width="7" height="3.500" rx="1.700" fill="#9aa0b4"/></svg>
  <svg width="31" height="31" viewBox="0 0 31 31"><defs><linearGradient id="eg" x2="1"><stop stop-color="#2a9fe6"/><stop offset="1" stop-color="#5fda6c"/></linearGradient></defs><circle cx="15.500" cy="15.500" r="15" fill="#1270c4"/><path d="M1 13Q4 0 16 .5 30 1 30.500 13q0 7-8 8-6 0-5-4 2-5-3-8-7-2-13 4z" fill="url(#eg)"/><path d="M12 11q-5 4-2 11 4 7 13 5 3-1 5-4-8 4-13-1-4-5-3-11z" fill="#0c4f9e"/></svg>
  <svg width="30" height="31" viewBox="0 0 30 31"><path d="M8 7V3q0-2 2-2h10q2 0 2 2v4" fill="none" stroke="#2496df" stroke-width="2"/><path d="M1 6h28v21q0 3-3 3H4q-3 0-3-3z" fill="#f2f2f2"/><path d="M9 11.500h5.500V17H9z" fill="#f04e23"/><path d="M15.500 11.500H21V17h-5.500z" fill="#7eba00"/><path d="M9 18h5.500v5.500H9z" fill="#00a3ee"/><path d="M15.500 18H21v5.500h-5.500z" fill="#feb800"/></svg>
  <svg class="run" width="30" height="32" viewBox="0 0 30 32"><path d="M15 31Q3 31 1 19 0 9 6 4l2 5q3-1 6 0 0-6 5-9 1 5 5 8 5 5 5 12-2 11-14 11z" fill="#fc7529"/><path d="M18 1q1 5 5 8 5 5 5 11-1 8-7 9 4-10-7-19 0-6 4-9z" fill="#ffc52e"/><circle cx="14" cy="18" r="6.500" fill="#7b4bd6"/><path d="M3 12q5 0 9 3-4 1-4 5 3 5 9 3-5 7-12 3-4-6-2-14z" fill="#f9433d"/><rect x="11.500" y="36.500" width="7" height="3.500" rx="1.700" fill="#9aa0b4"/></svg>
  <svg width="30" height="30" viewBox="0 0 30 30"><circle cx="14" cy="14" r="13.500" fill="#7a14d0"/><path d="M3 14q1-5 6-4 3 0 5 1 2-1 5-1 5-1 6 4 0 6-5 6-4 0-6-3-2 3-6 3-5 0-5-6z" fill="#fff"/><ellipse cx="9" cy="14.500" rx="2.500" ry="1.800" fill="#7a14d0"/><ellipse cx="19" cy="14.500" rx="2.500" ry="1.800" fill="#7a14d0"/><circle cx="22.500" cy="23" r="6.500" fill="#fb7b2c"/><circle cx="22.500" cy="23" r="2.700" fill="#7b4bd6"/></svg>
  <div class="tab"><svg class="run" width="28" height="28" viewBox="0 0 28 28"><rect width="28" height="28" fill="#f6f8fa"/><path d="M14 9v10M9 14h10M8 5v6M5 8h6M20 5v6M17 8h6M8 17v6M5 20h6M20 17v6M17 20h6M14 2v4M12 4h4M14 22v4M12 24h4M4 12v4M2 14h4M24 12v4M22 14h4" stroke="#2a6e93" stroke-width="1.300"/><rect x="4.500" y="34.500" width="20" height="3.500" rx="1.700" fill="#4cc2ff"/></svg></div>
  <svg class="t1" width="14" height="9" viewBox="0 0 14 9"><path d="M1 8l6-6.500L13 8" fill="none" stroke="#fff" stroke-width="1.700"/></svg>
  <svg width="22" height="22" viewBox="0 0 22 22"><path d="M2 9q2-7 9-7 5 0 8 4M19 1v5h-5M2 21v-5h5M2 16q2 4 6 5" fill="none" stroke="#ddd" stroke-width="1.400"/><circle cx="15.500" cy="16" r="5.200" fill="#ff9a0a"/></svg>
  <p class="lang">ENG<br>IN</p>
  <svg width="20" height="16" viewBox="0 0 20 16"><g fill="none" stroke="#fff" stroke-width="1.500"><path d="M1 6q9-9 18 0M4 9.200q6-6 12 0M7 12q3-3 6 0"/></g><circle cx="10" cy="14" r="1.700" fill="#fff"/></svg>
  <svg width="21" height="18" viewBox="0 0 21 18"><path d="M1 6.500h3.500L9 2v14l-4.500-4.500H1zM12 6q2 3 0 6M14.500 4q3.500 5 0 10M17 2q5 7 0 14" fill="none" stroke="#fff" stroke-width="1.300"/></svg>
  <svg width="20" height="18" viewBox="0 0 20 18"><path d="M6 4h10q1.500 0 1.500 1.500v9q0 1.500-1.500 1.500H3.500Q2 16 2 14.500V11M19 8v4" fill="none" stroke="#fff" stroke-width="1.500"/><path d="M8 7h7v6H5v-2z" fill="#fff"/><path d="M5 0L0 7h3l-1 5 5-7H4z" fill="#fff"/></svg>
  <p class="clock">08:16 PM<br>21-04-2023</p>
</footer>
</body>
</html>
```
FILE: styles.css
```css
*{box-sizing:border-box;margin:0;padding:0}
body{width:1920px;height:1080px;overflow:hidden;display:flex;flex-direction:column;background:#f4f4f4;font-family:Inter,"Liberation Sans",sans-serif;font-size:15px;color:#333}
svg{flex:none;display:block}
.defs{position:absolute}
ul{list-style:none}
.titlebar{height:29px;background:linear-gradient(90deg,#eff3fa 0 60%,#f0f2f6);display:flex;align-items:center;padding-left:3px;font-family:"Open Sans",sans-serif}
.appicon{width:18px;height:18px}
.apptitle{font-size:14px;margin-left:6px;color:#111;letter-spacing:.1px}
.winctl{width:140px;height:16px;margin-left:auto;margin-right:15px}
.menu{height:27px;background:#fff;display:grid;align-items:center;padding-left:10px;grid-template-columns:43px 51px 91px 93px 55px 73px 50px 68px 61px 75px auto;font-size:14px;letter-spacing:-.05px;color:#111}
.toolbar{height:51px;display:grid;align-items:center;justify-items:start;padding-left:18px;grid-template-columns:41px 16px 40px 39px 33px 18px 40px 38px 34px 17px 33px 19px 14px 34px 20px 37px 33px 20px 16px 41px 39px 41px 17px 30px 18px 32px 20px 33px 49px 149px 16px 30px 20px 41px 17px 591px 46px 26px auto}
.i24{width:24px;height:24px}
.i20{width:20px;height:20px}
.i16{width:16px;height:16px}
.sep{width:1px;height:44px;background:#d0d0d0}
.ca{width:8px;height:6px;color:#555}
.ca.lt{color:#bbb}
.ca.big{width:10px;height:7px}
.ca.blk{color:#000}
.pinbox{width:38px;height:37px;background:#e4e4e4;display:flex;align-items:center;justify-content:center}
.combo{width:130px;height:29px;border:1px solid #d4d4d4;display:flex;align-items:center;justify-content:flex-end;padding-right:7px}
.showme{font-size:16px;color:#222;letter-spacing:-.2px}
.work{height:850px;display:grid;grid-template-columns:263px 193px 1443px;column-gap:7px}
.pane{background:#fff;border-right:2px solid #d2d2d2;height:850px;display:flex;flex-direction:column}
.tabs2{display:flex;height:33px;border-top:1px solid #d4d4d4;font-size:16px;line-height:31px}
.tabs2 b{width:96px;padding-left:22px;color:#111;font-weight:600}
.tabs2 span{flex:1;display:flex;justify-content:space-between;align-items:center;padding:0 8px 0 15px;background:#fafafa;border:solid #d2d2d2;border-width:0 0 2px 2px;letter-spacing:-.3px}
.sources{padding:5px 13px 0 14px;height:63px;border-bottom:1px solid #ddd;color:#444}
.src{display:flex;align-items:center;gap:9px;height:25px;padding-left:10px;letter-spacing:-.2px;position:relative}
.src.on{background:#e4e4e4}
.chk{position:absolute;left:22px;top:14px;width:9px;height:9px;border-radius:50%;background:#3d85a8}
.searchrow{display:flex;align-items:center;height:49px;padding:0 0 0 10px;margin-top:1px}
.sbox{width:162px;height:29px;border:1px solid #c4c4c4;display:flex;align-items:center;justify-content:space-between;padding:0 6px 0 8px;color:#999;margin-right:4px}
.vsep{width:1px;height:22px;background:#ccc;margin:0 8px 0 7px}
.searchrow .big{margin-left:10px}
h3{font-size:16px;font-weight:600;color:#111;padding-left:23px;line-height:20px;letter-spacing:0}
.listwrap{position:relative;margin-top:7px;height:590px;overflow:hidden}
.fields li{height:26.2px;display:flex;align-items:center;padding-left:28px;color:#222;white-space:nowrap;letter-spacing:-.17px}
.fields svg,.abc{width:17px;height:14px;margin-right:14px;color:#3c9f7b}
.fields .d svg,.fields .d .abc{color:#4488a6}
.abc{font-style:normal;font-size:11.500px;font-weight:500;letter-spacing:-.4px;line-height:14px;width:20px;margin-left:-1px;margin-right:12px}
.it{font-style:italic}
.listwrap .meas{border-top:1px solid #d4d4d4;margin:1px 9px 0 19px}
.meas li{padding-left:9px}
.track{position:absolute;right:0;top:0;width:20px;height:590px;background:#f0f0f0}
.track i{display:block;width:6px;height:279px;background:#888;margin:22px 0 0 7px}
.params{border-top:1px solid #ddd;margin-top:2px;padding-top:4px;flex:1}
.params .fields{margin-top:7px}
.cards{display:flex;flex-direction:column;gap:8px}
.card{border:1px solid #d2d2d2;border-right-width:2px;background:#fafafa;color:#444;padding:8px 8px;line-height:19px;letter-spacing:-.1px}
.pages{height:77px}.filters{height:97px}.marks{height:301px}
.drop{display:flex;align-items:center;height:26px;width:175px;border:1px solid #d0d0d0;margin-top:17px;padding-left:13px;gap:8px}
.drop span{margin-left:-1px}
.drop i{margin-left:auto;width:23px;height:24px;border-left:1px solid #d0d0d0;display:grid;place-items:center}
.btns{display:grid;grid-template-columns:54px 53px 54px;column-gap:7px;row-gap:7px;margin-top:7px}
.btns div{height:53px;border:1px solid #d0d0d0;border-right-width:2px;display:grid;grid-template-rows:33px 16px;justify-items:center;align-items:center;font-size:14.500px;line-height:16px;color:#333;letter-spacing:-.3px}
.prow{display:grid;grid-template-columns:16px 139px;column-gap:7px;align-items:center;justify-items:center;margin:3px 0 0 8px}
.btns + .prow{margin-top:11px}
.pill{background:#00b180;color:#fff;border-radius:13px;height:25px;line-height:25px;width:139px;padding-left:13px;font-size:15px;font-weight:500;white-space:nowrap;letter-spacing:-.1px}
.blue{background:#4996b2}
.pill.big{width:185px;margin-left:3px;letter-spacing:0}
.shelf{height:35px;border:1px solid #d2d2d2;border-right-width:2px;border-bottom-width:2px;background:#fafafa;display:flex;align-items:center;margin-bottom:7px}
.shelf.rows{border-bottom-width:1px;margin-bottom:8px}
.sl{width:156px;height:32px;border-right:1px solid #d2d2d2;display:flex;align-items:center;gap:9px;padding-left:8px;color:#444;letter-spacing:-.1px}
.lower{display:flex;gap:7px;align-items:flex-start}
.viz{width:1243px;height:757px;background:#fff;border:1px solid #b0b0b0;border-right-width:2px;padding:0 6px 7px 7px}
h1{height:54px;text-align:center;font:600 25px/59px "Open Sans",sans-serif;color:#f28e2b;letter-spacing:-.22px}
.mapbox{position:relative;width:1227px;height:694px;border:1px solid #e2e2e2}
.map path,.map circle{stroke:#666;stroke-width:1.200px;vector-effect:non-scaling-stroke;stroke-linejoin:round}
.map .gray path{fill:#ececec;stroke:#999}
.map .w path{fill:#fff}
.map .w path.sea{stroke:none}
.map .ca1 path,.map .ca0 path,.map path.ca0{fill:#99739a}
.map path.us{fill:#9c769d}
.map path.au,.map path.p1{fill:#977096}
.map path.p2{fill:#a57fa4}
.map path.p3{fill:#ad86a8}
.map path.p4,.map circle.p4{fill:#b288ab}
.map path.p5{fill:#bf91b2}
.map path.p6{fill:#d0a4c4}
.map path.p8{fill:#efcfe6}
.map path.lg{fill:#e6e6e6;stroke:#999}
.map path.dk{fill:#666}
.map path.ln{fill:none;stroke-width:1.500px}
.map path.isl,.map .isl path{fill:none;stroke:#777;stroke-width:1.400px;stroke-dasharray:2 2.500 1 3}
.map .isl path.thick{stroke:#666;stroke-width:2.400px;stroke-dasharray:4 1}
.mapsearch{position:absolute;left:11px;top:11px;width:34px;height:34px;background:#f6f6f6;border:1px solid #ddd;border-left-color:#aaa;border-top-color:#aaa;display:grid;place-items:center}
.mapctl{position:absolute;left:11px;top:57px;width:34px;height:137px;background:#f6f6f6;border:1px solid #aaa;display:grid;grid-template-rows:34px 28px 34px 39px;justify-items:center;align-items:center}
.mpin{width:27px;height:27px;background:#e4e4e4;border:1px solid #aaa}
.play{margin-top:7px}
.attr{position:absolute;left:6px;bottom:2px;font:14px/18px "Liberation Sans",sans-serif;color:#555;letter-spacing:-.13px}
.unk{position:absolute;right:6px;bottom:6px;width:107px;height:23px;background:#b8b8b8;color:#fff;border-radius:3px;text-align:center;font:700 15.500px/23px "Open Sans",sans-serif}
.legend{width:193px;height:88px;border:1px solid #d2d2d2;border-right-width:2px;background:#fff;color:#444}
.lt1{height:36px;line-height:36px;padding-left:8px;background:#fafafa;letter-spacing:-.1px}
.grad{height:20px;margin:4px 5px 0;border:1px solid #a8a498;border-top-width:2px;border-right-width:2px;background:linear-gradient(90deg,#f0cae6,#c992b3 45%,#b77fa3 58%,#956a98 82%,#80557c)}
.lv{display:flex;justify-content:space-between;padding:4px 6px 0 5px;line-height:20px;font-size:14.500px}
.sheets{height:37px;background:#e6e6e6;display:grid;grid-template-columns:164px 69px 71px 71px 71px 71.600px 71px 71px 71.400px 71px 78px 75px 127px 130px 130px 130px 89px 91px 91px 56px 40px 39px 42px;border-bottom:1px solid #d4d4d4;font-size:14.500px;letter-spacing:-.2px;color:#666}
.sheets span{border-right:1px solid #ccc;display:flex;align-items:center;justify-content:center;gap:4px;white-space:nowrap;overflow:hidden;margin:1px 0 1px;padding-right:3px}
.sheets .ds{justify-content:flex-start;padding-left:12px;gap:6px}
.sheets .act{background:#fafafa;color:#444;font-weight:600;border-bottom:4px solid #f96170;margin:0;padding-top:2px;letter-spacing:-.35px}
.sheets .cut{justify-content:flex-start;padding-left:10px}
.sheets .new{padding:0 0 0 1px}
.status{height:26px;background:#ebebeb;display:grid;grid-template-columns:86px 132px 1240px 162px 34px 34px 59px 88px auto;padding-left:4px;font-size:13.500px;letter-spacing:-.2px;color:#222}
.status>span{display:flex;align-items:center;border-right:1px solid #d0d0d0}
.status .s1,.status .s2{border:0}
.user{padding-left:7px;gap:11px}
.user .blk{margin-left:auto;margin-right:10px}
.navs{padding-left:6px}
.views{border:0!important;padding-left:8px}
.taskbar{height:60px;border-top:1px solid #4a5468;background:linear-gradient(90deg,#1c232b 0 300px,#11245a 380px 560px,#161f6a 660px,#1a1f55 800px,#14205a 930px,#1b1f3e 1060px,#11235a 1200px 1300px,#1b2138 1380px,#1b222b 1500px);color:#fff;display:grid;align-items:center;justify-items:start;padding-left:26px;font:15px/20px "Open Sans",sans-serif;grid-template-rows:59px;grid-template-columns:558px 48px 288px 56px 55px 55px 54px 55px 56px 46px 290px 36px 42px 52px 30px 30px 30px 1fr}
.weather{display:flex;align-items:center;gap:8px}
.weather span{color:#c8ccd4}
.weather p{letter-spacing:-.2px;line-height:20px}
.tsearch{width:273px;height:41px;border-radius:21px;background:rgba(255,255,255,.13);display:flex;align-items:center;padding:0 8px 0 14px;color:#ccd0e2;font-size:16px}
.tsearch span{margin:0 auto 0 11px}
.run{overflow:visible}
.tab{width:46px;height:50px;border-radius:4px;background:rgba(255,255,255,.1);display:flex;align-items:center;justify-content:center}
.lang{text-align:center}
.clock{text-align:right;justify-self:end;padding-right:24px;letter-spacing:-.3px}
```
